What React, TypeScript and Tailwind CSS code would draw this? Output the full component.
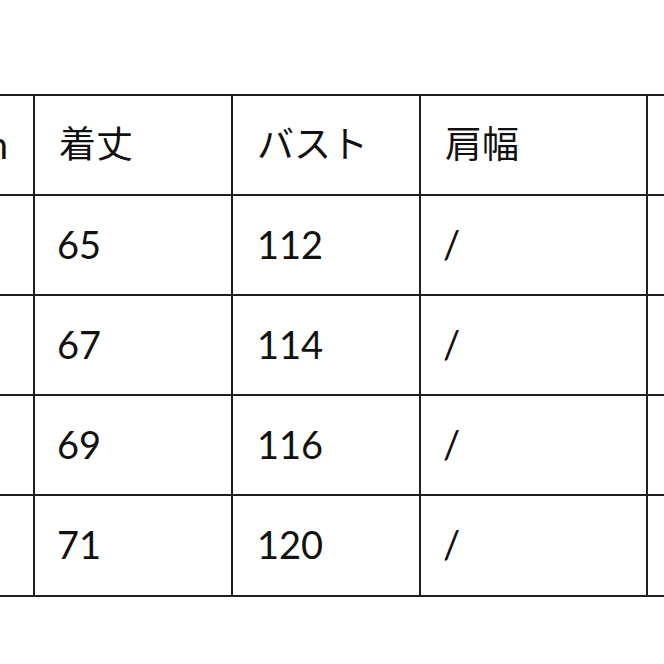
import React from "react";

const rows = [
  { h: "h-[100px]", cells: ["65", "112", "/"] },
  { h: "h-[100px]", cells: ["67", "114", "/"] },
  { h: "h-[100px]", cells: ["69", "116", "/"] },
  { h: "h-[101px]", cells: ["71", "120", "/"] },
];

const num = "font-['Lato','Noto_Sans',sans-serif] text-[38px] leading-none text-[#111]";
const jp = "font-['Noto_Sans_CJK_JP','Noto_Sans',sans-serif] text-[37px] leading-none text-[#111]";

export default function App() {
  return (
    <div className="w-[664px] h-[664px] bg-white overflow-hidden pt-[94px]">
      <div className="grid grid-cols-[35px_198px_188px_227px_1fr] border-t-2 border-[#1f1f1f]">
        {/* header */}
        <div className="h-[100px] border-r-2 border-b-2 border-[#1f1f1f] overflow-hidden flex items-center justify-end pr-[25px] pb-[2px]">
          <span className={`${num} whitespace-nowrap`}>cm</span>
        </div>
        <div className="h-[100px] border-r-2 border-b-2 border-[#1f1f1f] flex items-center pl-[24px] pb-[6px]">
          <span className={jp}>着丈</span>
        </div>
        <div className="h-[100px] border-r-2 border-b-2 border-[#1f1f1f] flex items-center pl-[24px] pb-[6px]">
          <span className={jp}>バスト</span>
        </div>
        <div className="h-[100px] border-r-2 border-b-2 border-[#1f1f1f] flex items-center pl-[24px] pb-[6px]">
          <span className={jp}>肩幅</span>
        </div>
        <div className="h-[100px] border-b-2 border-[#1f1f1f]" />
        {rows.map((r, i) => (
          <React.Fragment key={i}>
            <div className={`${r.h} border-r-2 border-b-2 border-[#1f1f1f]`} />
            <div className={`${r.h} border-r-2 border-b-2 border-[#1f1f1f] flex items-center pl-[22px] pb-[3px]`}>
              <span className={num}>{r.cells[0]}</span>
            </div>
            <div className={`${r.h} border-r-2 border-b-2 border-[#1f1f1f] flex items-center pl-[24px] pb-[3px]`}>
              <span className={num}>{r.cells[1]}</span>
            </div>
            <div className={`${r.h} border-r-2 border-b-2 border-[#1f1f1f] flex items-center pl-[22px] pb-[3px]`}>
              <span className={num}>{r.cells[2]}</span>
            </div>
            <div className={`${r.h} border-b-2 border-[#1f1f1f]`} />
          </React.Fragment>
        ))}
      </div>
    </div>
  );
}
